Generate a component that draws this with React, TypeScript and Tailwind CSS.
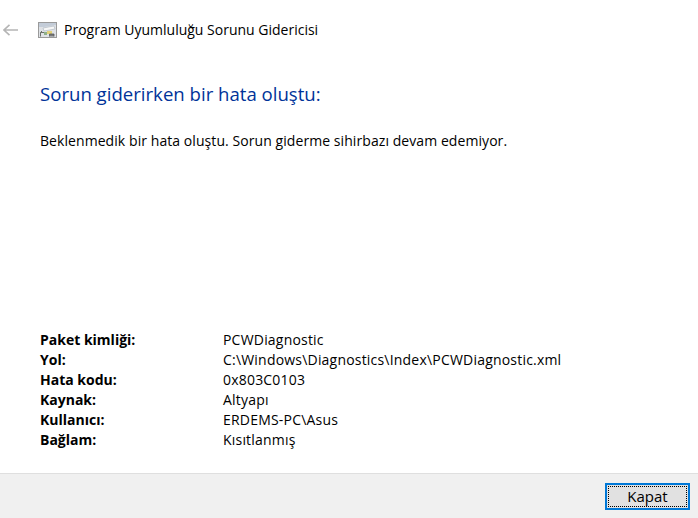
const details = [
  ["Paket kimliği:", "PCWDiagnostic"],
  ["Yol:", "C:\\Windows\\Diagnostics\\Index\\PCWDiagnostic.xml"],
  ["Hata kodu:", "0x803C0103"],
  ["Kaynak:", "Altyapı"],
  ["Kullanıcı:", "ERDEMS-PC\\Asus"],
  ["Bağlam:", "Kısıtlanmış"],
];

function TroubleshooterIcon() {
  return (
    <svg width="19" height="16" viewBox="0 0 19 16" className="shrink-0">
      <rect x="0.5" y="0.5" width="18" height="15" fill="#dfe2e6" stroke="#9a9a9a" />
      <path d="M1 1 H18 V3 L6 5 H1 Z" fill="#c3ccd8" />
      <path d="M5 6 L16 4 L17 7 L6 9 Z" fill="#f7f7f7" stroke="#aab3bd" strokeWidth="0.6" />
      <path d="M2.5 14.5 V10.5 H9 M2.5 10.5 L4 9" fill="none" stroke="#6b6f6b" strokeWidth="1" />
      <rect x="9" y="9" width="5" height="3" fill="#e3d27a" />
      <rect x="6" y="10" width="3" height="3" fill="#8fb08a" />
      <path d="M11.5 14.5 V12 H16 V14.5" fill="#77797a" stroke="#55585a" strokeWidth="0.8" />
    </svg>
  );
}

export default function App() {
  return (
    <div className="flex h-[518px] w-[698px] flex-col overflow-hidden bg-white font-['Open_Sans','Noto_Sans',sans-serif] text-[14px] text-black">
      <header className="flex h-[60px] shrink-0 items-center pl-[3px]">
        <svg width="16" height="12" viewBox="0 0 16 12" className="shrink-0">
          <path d="M1 6 H15 M6.5 0.8 L1 6 L6.5 11.2" fill="none" stroke="#b5b5b5" strokeWidth="1.6" />
        </svg>
        <div className="ml-[19px] flex items-center gap-[7px]">
          <TroubleshooterIcon />
          <span className="text-[14px] leading-5">Program Uyumluluğu Sorunu Gidericisi</span>
        </div>
      </header>

      <main className="flex flex-1 flex-col pl-10">
        <h1 className="mt-[20px] text-[18.6px] leading-7 font-normal text-[#003399]">Sorun giderirken bir hata oluştu:</h1>
        <p className="mt-[23px] text-[14px] leading-5 tracking-[0.07px]">
          Beklenmedik bir hata oluştu. Sorun giderme sihirbazı devam edemiyor.
        </p>
        <dl className="mt-auto mb-[23px] grid grid-cols-[183px_1fr] text-[14px] leading-5">
          {details.map(([label, value]) => (
            <div key={label} className="col-span-2 grid grid-cols-subgrid">
              <dt className="font-bold">{label}</dt>
              <dd className="tracking-[0.2px]">{value}</dd>
            </div>
          ))}
        </dl>
      </main>

      <footer className="flex h-[45px] shrink-0 items-center justify-end border-t border-[#dfdfdf] bg-[#f0f0f0] pt-px pr-2">
        <button className="h-[27px] w-[85px] border-2 border-[#0078d7] bg-[#e1e1e1] p-px text-[15px] leading-none">
          <span className="flex h-full w-full items-center justify-center border border-dotted border-black">Kapat</span>
        </button>
      </footer>
    </div>
  );
}
